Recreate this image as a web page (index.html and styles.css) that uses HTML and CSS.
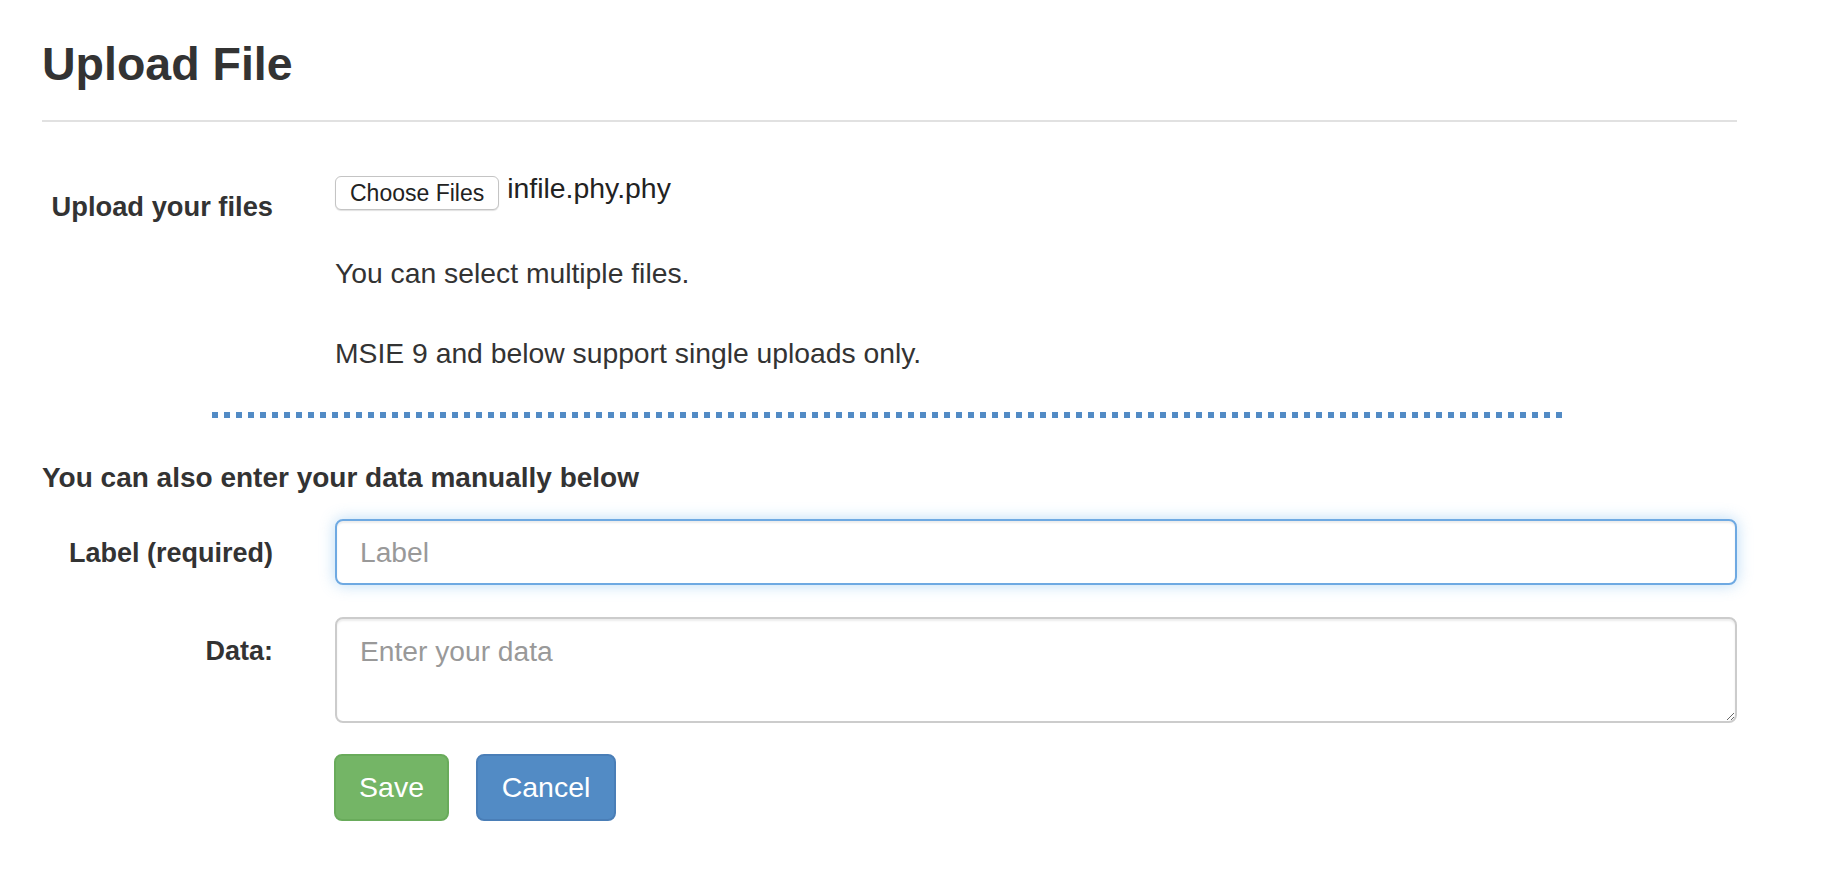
FILE: index.html
```html
<!DOCTYPE html>
<html lang="en">
<head>
<meta charset="utf-8">
<title>Upload File</title>
<link rel="stylesheet" href="styles.css">
</head>
<body>
<div class="page">
  <h3 class="title">Upload File</h3>
  <div class="rule"></div>

  <div class="row upload-row">
    <label class="col-label upload-label">Upload your files</label>
    <div class="col-field">
      <div class="file-line">
        <button type="button" class="choose">Choose Files</button>
        <span class="fname">infile.phy.phy</span>
      </div>
      <p class="help first">You can select multiple files.</p>
      <p class="help">MSIE 9 and below support single uploads only.</p>
    </div>
  </div>

  <div class="dots"></div>

  <h4 class="manual">You can also enter your data manually below</h4>

  <div class="row label-row">
    <label class="col-label" for="lbl">Label (required)</label>
    <div class="col-field">
      <input id="lbl" class="control focus" type="text" placeholder="Label">
    </div>
  </div>

  <div class="row data-row">
    <label class="col-label" for="dat">Data:</label>
    <div class="col-field">
      <textarea id="dat" class="control area" placeholder="Enter your data"></textarea>
    </div>
  </div>

  <div class="row btn-row">
    <div class="col-spacer"></div>
    <div class="col-field actions">
      <button type="button" class="btn btn-save">Save</button>
      <button type="button" class="btn btn-cancel">Cancel</button>
    </div>
  </div>
</div>
</body>
</html>
```

FILE: styles.css
```css
html, body {
  margin: 0;
  padding: 0;
  background: #ffffff;
}

body {
  font-family: "Liberation Sans", Arial, Helvetica, sans-serif;
  color: #333333;
  font-size: 28px;
  line-height: 38px;
}

.page {
  width: 1695px;
  padding-left: 42px;
}

.title {
  margin: 39px 0 0;
  font-size: 46.5px;
  line-height: 50px;
  font-weight: 700;
  color: #333333;
}

.rule {
  margin-top: 31px;
  height: 2px;
  background: #e1e1e1;
}

.row {
  display: flex;
  align-items: flex-start;
}

.col-label {
  width: 293px;
  flex: 0 0 293px;
  box-sizing: border-box;
  padding-right: 62px;
  text-align: right;
  font-weight: 700;
  font-size: 27px;
  line-height: 38px;
  padding-top: 15px;
}

.col-spacer {
  flex: 0 0 293px;
}

.col-field {
  flex: 1 1 auto;
}

.upload-row {
  margin-top: 54px;
}

.upload-label {
  padding-top: 12px;
  font-size: 27.3px;
}

.file-line {
  display: flex;
  align-items: flex-start;
}

.choose {
  box-sizing: border-box;
  height: 34px;
  padding: 0 14px;
  margin: 0;
  font-family: "Liberation Sans", Arial, Helvetica, sans-serif;
  font-size: 23px;
  color: #222222;
  background: #ffffff;
  border: 1px solid #c4c4c4;
  border-radius: 6px;
  box-shadow: 0 1px 1px rgba(0, 0, 0, 0.12);
  cursor: pointer;
}

.fname {
  margin-left: 8px;
  margin-top: -3px;
  font-size: 28.4px;
  line-height: 30px;
  color: #222222;
}

.help {
  margin: 42px 0 0;
  font-size: 28.3px;
  line-height: 38px;
}

.help.first {
  margin-top: 44px;
}

.dots {
  width: 1356px;
  height: 6px;
  margin: 40px auto 0;
  background: repeating-linear-gradient(to right, #528bc5 0, #528bc5 6px, transparent 6px, transparent 12px);
}

.manual {
  margin: 41px 0 0;
  font-size: 28px;
  line-height: 38px;
  font-weight: 700;
}

.label-row {
  margin-top: 22px;
}

.control {
  display: block;
  box-sizing: border-box;
  width: 100%;
  margin: 0;
  font-family: "Liberation Sans", Arial, Helvetica, sans-serif;
  font-size: 28.2px;
  line-height: 38px;
  color: #555555;
  background: #ffffff;
  border: 2px solid #cccccc;
  border-radius: 8px;
  padding: 0 23px;
  box-shadow: inset 0 2px 2px rgba(0, 0, 0, 0.075);
  outline: none;
}

.control::placeholder {
  color: #999999;
  opacity: 1;
}

.focus {
  height: 66px;
  border-color: #6ea9e2;
  box-shadow: inset 0 2px 2px rgba(0, 0, 0, 0.075), 0 0 15px rgba(102, 175, 233, 0.45);
}

.data-row {
  margin-top: 32px;
}

.area {
  height: 106px;
  padding-top: 13px;
  padding-bottom: 11px;
  resize: vertical;
}

.btn-row {
  margin-top: 31px;
}

.actions {
  display: flex;
  gap: 27px;
  margin-left: -1px;
}

.btn {
  box-sizing: border-box;
  height: 67px;
  padding: 0;
  margin: 0;
  font-family: "Liberation Sans", Arial, Helvetica, sans-serif;
  font-size: 28.5px;
  color: #ffffff;
  border: 2px solid transparent;
  border-radius: 8px;
  cursor: pointer;
}

.btn-save {
  width: 115px;
  background: #74b566;
  border-color: #69ab5b;
}

.btn-cancel {
  width: 140px;
  background: #528bc5;
  border-color: #4a7eb7;
}
```
